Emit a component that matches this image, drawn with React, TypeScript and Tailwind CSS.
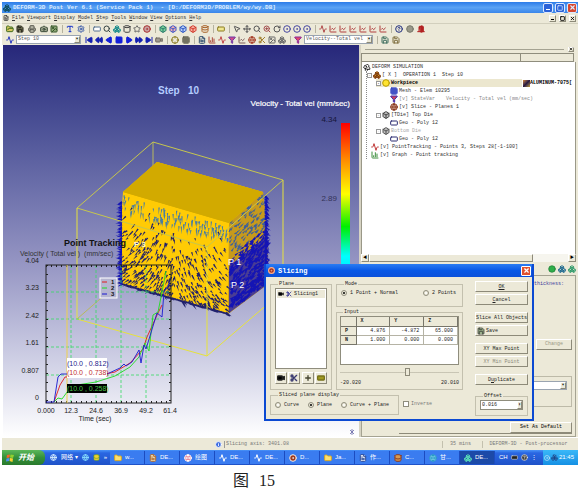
import React from "react";
import {
  Activity, BarChart3, Box, Boxes, Camera, ChartLine, Circle, CircleDot, Crosshair, Cylinder, Database,
  DoorOpen, FastForward, FileText, Filter, Folder, FolderOpen, Globe, Grid3x3, HelpCircle, Image,
  Info, Move, MousePointer2, Play, Plus, Printer, RectangleHorizontal, Rewind, RotateCw, Save, Scissors,
  Search, Settings, SkipBack, SkipForward, Square, Star, Trees, Type, Video, X, ZoomIn,
} from "lucide-react";

type IconType = React.ComponentType<{ className?: string; strokeWidth?: number }>;
type Tool = [IconType, string, string];

const MONO = "font-['Liberation_Mono','Noto_Sans_CJK_SC',monospace]";
const RAISED =
  "border border-t-white border-l-white border-r-[#8d8a79] border-b-[#8d8a79] bg-[#ece9d8]";

function ToolGroup({ tools, sep, wide }: { tools: Tool[]; sep?: boolean; wide?: boolean }) {
  return (
    <div className={`flex items-center ${wide ? "gap-[3px]" : "gap-[2px]"} ${sep ? "ml-1 border-l border-[#b5b29f] pl-[3px]" : "ml-1"}`}>
      {tools.map(([Icon, color, label]) => (
        <button key={label} type="button" aria-label={label} className={color}>
          <Icon className="size-2" strokeWidth={3} />
        </button>
      ))}
    </div>
  );
}

const fileTools: Tool[] = [
  [FolderOpen, "text-[#3f6b1e] [&_svg]:fill-[#d8c860]", "Open"],
  [Save, "text-[#222218] [&_svg]:fill-[#77775a]", "Save"],
];
const printTools: Tool[] = [[Printer, "text-[#5a5a50] [&_svg]:fill-[#b5b5a5]", "Print"]];
const captureTools: Tool[] = [
  [Camera, "text-[#3a4a38] [&_svg]:fill-[#a0a890]", "Capture"],
  [Image, "text-[#35552a] [&_svg]:fill-[#90a878]", "Picture"],
];
const textTools: Tool[] = [[Type, "text-[#1a35c8]", "Text"], [Settings, "text-[#3a5aa8]", "Settings"]];
const windowTools: Tool[] = [
  [RectangleHorizontal, "text-[#55708f] [&_svg]:fill-white", "Single window"], [Search, "text-[#33403f]", "Find"],
  [Boxes, "text-[#168a8a]", "Objects"], [Cylinder, "text-[#444]", "Cylinder"],
  [Star, "text-[#666]", "Favourite"], [CircleDot, "text-[#a83232] [&_svg]:fill-[#c8a0a0]", "Target"],
];
const cubeTools: Tool[] = [
  [Box, "text-[#2c7a6c] [&_svg]:fill-[#7ad09a]", "Shaded"], [Box, "text-[#3d57c9] [&_svg]:fill-[#f0b0b0]", "Shaded mesh"],
  [Box, "text-[#2c56c0] [&_svg]:fill-[#b8d0f8]", "Wireframe"], [Box, "text-[#cf3a2c] [&_svg]:fill-[#f8b0a0]", "Back"],
];
const planeTools: Tool[] = [[Database, "text-[#a8632a]", "Symmetry"]];
const rulerTools: Tool[] = [[RectangleHorizontal, "text-[#8a7a20] [&_svg]:fill-[#f0e890]", "Ruler"]];
const viewTools: Tool[] = [
  [MousePointer2, "text-[#555]", "Select"], [Move, "text-[#555]", "Pan"],
  [Search, "text-[#555]", "Zoom"], [ZoomIn, "text-[#a04a4a]", "Zoom window"],
  [RotateCw, "text-[#555]", "Rotate"], [CircleDot, "text-[#4747a0]", "Rotate X"],
  [CircleDot, "text-[#4747a0]", "Rotate Y"], [CircleDot, "text-[#4747a0]", "Rotate Z"],
];
const axisTools: Tool[] = [
  [Activity, "text-[#b04a4a]", "Isometric"], [ChartLine, "text-[#b03c3c]", "View XY"],
  [ChartLine, "text-[#b03c3c]", "View YZ"], [ChartLine, "text-[#b03c3c]", "View ZX"],
  [ChartLine, "text-[#b03c3c]", "View YX"], [ChartLine, "text-[#b03c3c]", "View ZY"],
  [ChartLine, "text-[#b03c3c]", "View XZ"],
];
const helpTools: Tool[] = [
  [HelpCircle, "text-[#23307f]", "Help"], [Circle, "text-[#77776a] [&_svg]:fill-[#99998a]", "Stop"],
  [DoorOpen, "text-[#b22222] [&_svg]:fill-[#b22222]", "Exit"],
];
const playTools: Tool[] = [
  [SkipBack, "text-[#1420b0] [&_svg]:fill-current", "First step"],
  [Rewind, "text-[#1420b0] [&_svg]:fill-current", "Fast backward"],
  [Play, "text-[#1420d8] [&_svg]:fill-current rotate-180", "Play backward"],
  [Square, "text-[#1420d8] [&_svg]:fill-current", "Stop playing"],
  [Play, "text-[#1420d8] [&_svg]:fill-current", "Play"],
  [FastForward, "text-[#1420b0] [&_svg]:fill-current", "Fast forward"],
  [SkipForward, "text-[#1420b0] [&_svg]:fill-current", "Last step"],
  [Video, "text-[#706a60] [&_svg]:fill-[#a09a90]", "Record"],
];
const pickTools: Tool[] = [[Crosshair, "text-[#8a7a20]", "Pick"], [Grid3x3, "text-[#4a4a38]", "Mesh"]];
const postTools: Tool[] = [
  [FileText, "text-[#33506f]", "Summary"], [BarChart3, "text-[#a8483a]", "Graph"],
  [Activity, "text-[#c04646]", "Point tracking"], [Filter, "text-[#6a3aa8] [&_svg]:fill-[#d04a8a]", "State variable"],
  [ChartLine, "text-[#7a5a58]", "Load stroke"], [Globe, "text-[#a8402a]", "Flow net"],
  [Scissors, "text-[#a07c28]", "Slicing"], [Image, "text-[#666]", "Mirror"],
  [Boxes, "text-[#6a6a6a]", "Extract"],
];
const variableTools: Tool[] = [[Filter, "text-[#8a2a9a] [&_svg]:fill-[#e04a6a]", "Variable"]];
const exportTools: Tool[] = [[Save, "text-[#3f6f5f]", "Save view"], [Save, "text-[#7f6f3f]", "Load view"]];

function PlainSelect({ label, value, className }: { label: string; value: string; className: string }) {
  return (
    <div className={`flex items-center border border-[#9aa4b0] bg-white ${className}`}>
      <select aria-label={label} defaultValue={value} className="min-w-0 flex-1 appearance-none overflow-hidden pl-px text-[5px] leading-[7px] whitespace-pre text-[#555]">
        <option>{value}</option>
      </select>
      <span className={`flex h-[7px] w-[6px] shrink-0 items-center justify-center text-[5px] leading-none text-black ${RAISED}`}>▾</span>
    </div>
  );
}

/* Velocity arrows scattered over the two visible faces of the billet. */
function makeArrows() {
  let seed = 11;
  const rnd = () => {
    seed = (seed * 16807) % 2147483647;
    return seed / 2147483647;
  };
  const arrow = (x: number, y: number, a: number, len: number, w: number) => {
    const dx = Math.cos(a), dy = Math.sin(a);
    const p = (n: number) => n.toFixed(1);
    return `M${p(x - dy * w)} ${p(y + dx * w)}L${p(x + dx * len)} ${p(y + dy * len)}L${p(x + dy * w)} ${p(y - dx * w)}Z`;
  };
  let top = "", dark = "", right = "", edge = "";
  for (let i = 0; i < 130; i++) {
    const u = rnd(), v = rnd() * 0.17;
    top += arrow(124 + u * 104, 195 + u * 31 + v * 92, 1.5 + rnd() * 0.3, 4 + rnd() * 4, 0.7);
  }
  for (let i = 0; i < 460; i++) {
    const u = rnd(), v = 0.12 + 0.88 * Math.sqrt(rnd());
    const lean = u < 0.5 ? 2.3 - u * 1.4 : 1.6 - (u - 0.5) * 1.2;
    dark += arrow(121 + u * 106, 192 + u * 31 + v * 92, lean + v * (u < 0.5 ? 0.4 : -0.4), 3 + rnd() * 4, 0.8);
  }
  for (let i = 0; i < 560; i++) {
    const u = rnd(), v = rnd();
    const seg = arrow(229 + u * (36 + v * 3), 223 - u * 30 + v * 89, -0.6 - rnd() * 0.5, 4 + v * 3, 0.7 + v * 0.5);
    if (v > 0.4) edge += seg;
    else if (i % 2) right += seg;
  }
  for (let i = 0; i < 60; i++) {
    const t = i / 60;
    edge += arrow(122, 202 + t * 84, 2.7 + rnd() * 0.7, 4 + rnd() * 3, 1.1);
    edge += arrow(265, 196 + t * 86, 0.4 + rnd() * 0.5, 4 + rnd() * 3, 1.1);
    dark += arrow(122 + t * 106, 284 + t * 30, 0.1 + rnd() * 0.5, 6, 1.1);
  }
  return { top, dark, right, edge };
}
const arrows = makeArrows();

const yTicks: [string, number][] = [["4.04", 263], ["3.23", 290], ["2.42", 318], ["1.61", 345], ["0.807", 373], ["0", 400]];
const xTicks: [string, number][] = [["0.000", 46], ["12.3", 71], ["24.6", 96], ["36.9", 121], ["49.2", 146], ["61.4", 170]];

function Viewport() {
  return (
    <div className="min-w-0 flex-1 border-l border-white bg-linear-to-b from-[#27277a] via-[#9494c2] via-55% to-white">
      <svg viewBox="3 45 356 392" className="block w-full font-['Liberation_Sans',Arial,sans-serif]">
        <defs>
          <linearGradient id="scale" x1="0" y1="0" x2="0" y2="1">
            <stop offset="0" stopColor="#f00" />
            <stop offset="0.25" stopColor="#ff8c00" />
            <stop offset="0.48" stopColor="#ff0" />
            <stop offset="0.7" stopColor="#0e0" />
            <stop offset="0.9" stopColor="#0ff" />
            <stop offset="1" stopColor="#0ef" />
          </linearGradient>
        </defs>
        <path d="M153 142V262M153 253L77 319M153 253L283 291" fill="none" stroke="#b9b95c" />
        <path d="M123 192L157 162L263 192L267 230L268 284L228 314L123 285L120 235Z" fill="#ffcb05" />
        <path d="M229 223L263 192L267 230L268 284L228 314Z" fill="#c79a1c" />
        <path d="M229 266L267 236L268 284L229 313Z" fill="#1616c8" opacity="0.7" />
        <path d={arrows.top} fill="#4a7da2" />
        <path d={arrows.dark} fill="#20206c" />
        <path d={arrows.right} fill="#3c5f9c" />
        <path d={arrows.edge} fill="#1414b4" />
        <path d="M123 192L157 162L263 192L229 223Z" fill="#d2aa00" />
        <path d="M207 247L77 208L153 142L283 180Z" fill="none" stroke="#c6c64e" />
        <path d="M77 208V319L207 356L283 291V180M207 247V356" fill="none" stroke="#e6e23c" />
        <path d="M123 192L157 162L263 192L229 223Z" fill="#d2aa00" />
        <rect x="341" y="123" width="9" height="148" fill="url(#scale)" />

        <text x="158" y="94" fontSize="10" fontWeight="bold" fill="#b4ccff" xmlSpace="preserve" className="whitespace-pre">Step   10</text>
        <text x="350" y="106" fontSize="8" fill="#fff" textAnchor="end" stroke="#fff" strokeWidth="0.2">Velocity - Total vel (mm/sec)</text>
        <text x="337" y="122" fontSize="8" fill="#16163a" textAnchor="end">4.34</text>
        <text x="337" y="201" fontSize="8" fill="#333358" textAnchor="end">2.89</text>
        <text x="228" y="265" fontSize="9" fill="#fff">P 1</text>
        <text x="231" y="288" fontSize="9" fill="#fff">P 2</text>

        <text x="64" y="246" fontSize="9" fontWeight="bold" fill="#111">Point Tracking</text>
        <text x="134" y="247" fontSize="8" fontWeight="bold" fill="#fff8d0">P 3</text>
        <text x="20" y="256" fontSize="7" fill="#333" className="whitespace-pre">Velocity ( Total vel )  (mm/sec)</text>
        <path d="M71 265V403M96 265V403M121 265V403M146 265V403M46 292H171M46 319H171M46 347H171M46 375H171" stroke="#35dc62" strokeDasharray="3 2" strokeWidth="0.8" />
        <rect x="46" y="265" width="125" height="138" fill="none" stroke="#222" />
        <path d="M46 402H171M46 266H171" stroke="#222" strokeWidth="2" strokeDasharray="1 4" />
        <path d="M47 265V403M170 265V403" stroke="#222" strokeWidth="2" strokeDasharray="1 8" />
        <path d="M67 265V403" stroke="#efd04c" />
        <g fill="none" strokeWidth="0.9">
          <path d="M54 402L60 385L65 377L96 376L115 372L130 363L143 349L147 337L158 313L162 305" stroke="#e01c1c" />
          <path d="M54 402L58 398L62 399L70 388L77 385L96 382L115 376L130 367L139 357L145 343L149 351L153 315L158 312L162 292L166 271" stroke="#1fdc1f" />
          <path d="M46 402H54L58 377L61 374H107L120 368L124 364L126 366L132 362L139 350L141 363L144 345L146 349L157 313L162 317L164 292L170 282" stroke="#1818d0" />
        </g>
        <rect x="100" y="278" width="17" height="20" fill="#b5b5d0" stroke="#fff" />
        <path d="M102 282H107" stroke="#e01c1c" />
        <path d="M102 288H107" stroke="#1fdc1f" />
        <path d="M102 294H107" stroke="#1818d0" />
        <g fontSize="6" fontWeight="bold" fill="#111">
          <text x="111" y="284">1</text>
          <text x="111" y="290">2</text>
          <text x="111" y="296">3</text>
        </g>
        <rect x="67" y="358" width="40" height="20" fill="#fff" />
        <rect x="67" y="384" width="40" height="9" fill="#000" />
        <g fontSize="7">
          <text x="67" y="366" fill="#23238c">(10.0 , 0.812)</text>
          <text x="67" y="375" fill="#c23030">(10.0 , 0.738)</text>
          <text x="67" y="391" fill="#49c649">(10.0 , 0.258)</text>
        </g>
        <g fontSize="7" fill="#222">
          {yTicks.map(([t, y]) => <text key={t} x="39" y={y} textAnchor="end">{t}</text>)}
          {xTicks.map(([t, x]) => <text key={t} x={x} y="413" textAnchor="middle">{t}</text>)}
          <text x="95" y="421" textAnchor="middle">Time (sec)</text>
        </g>
        <path d="M350 430L354 434M354 430L350 434M352 429V435" stroke="#6a6aa8" strokeWidth="0.8" />
      </svg>
    </div>
  );
}

interface Node { icon: IconType; color: string; text: string; extra?: string; muted?: boolean }
const nodes: Node[] = [
  { icon: Grid3x3, color: "text-[#2435b8] fill-[#a0b0f0]", text: "Mesh - Elem 10295" },
  { icon: Filter, color: "text-[#3a2fb0] fill-[#d0405a]", text: "[v] StateVar", extra: "Velocity - Total vel (mm/sec)", muted: true },
  { icon: Globe, color: "text-[#8a3a20] fill-[#e0c0b0]", text: "[v] Slice - Planes 1" },
];

function TreeIcon({ icon: Icon, color }: { icon: IconType; color: string }) {
  return <Icon className={`size-2 shrink-0 ${color}`} strokeWidth={3} />;
}

function Toggle() {
  return <span className="flex size-[5px] shrink-0 items-center justify-center border border-[#999] bg-white text-[4px] leading-none">-</span>;
}

function Tree() {
  const row = "flex h-2 items-center gap-[1px] whitespace-pre";
  return (
    <div className="h-[192px] overflow-hidden border-r border-l border-[#9a9888] bg-white pt-px pl-px text-[5px] text-[#333]">
      <div className={row}><TreeIcon icon={Trees} color="text-[#222]" />DEFORM SIMULATION</div>
      <div className="ml-[3px] border-l border-dotted border-[#888]">
        <div className={row}><Toggle /><TreeIcon icon={Boxes} color="text-[#7a3a10] fill-[#e09a20]" />{"[ X ]  OPERATION 1  Step 10"}</div>
        <div className="ml-[9px]">
          <div className="flex h-2 items-center">
            <div className="flex h-2 w-[146px] items-center gap-[1px] bg-[#ece7cf] font-bold text-black">
              <Toggle /><TreeIcon icon={Circle} color="text-[#b89a00] fill-[#ffe430]" />Workpiece
            </div>
            <span className="ml-px size-[7px] shrink-0 bg-linear-to-br from-[#e08a20] via-[#2a1a40] to-[#c8a020]" />
            <span className="font-bold text-black">ALUMINUM-7075[</span>
          </div>
          {nodes.map((n) => (
            <div key={n.text} className={`${row} pl-[14px] ${n.muted ? "text-[#888]" : ""}`}>
              <TreeIcon icon={n.icon} color={n.color} />
              <span className={n.extra ? "w-[46px]" : ""}>{n.text}</span>
              {n.extra && <span>{n.extra}</span>}
            </div>
          ))}
          <div className={row}><Toggle /><TreeIcon icon={Box} color="text-[#444] fill-[#bbb]" />[TDie] Top Die</div>
          <div className={`${row} pl-[14px]`}><TreeIcon icon={RectangleHorizontal} color="text-[#2a2a70]" />Geo - Poly 12</div>
          <div className={`${row} text-[#aaa]`}><Toggle /><TreeIcon icon={Box} color="text-[#555] fill-[#bbb]" />Bottom Die</div>
          <div className={`${row} pl-[14px]`}><TreeIcon icon={RectangleHorizontal} color="text-[#2a2a70]" />Geo - Poly 12</div>
        </div>
        <div className={`${row} pl-1`}><TreeIcon icon={Activity} color="text-[#c03a3a]" />[v] PointTracking - Points 3, Steps 28[-1-100]</div>
        <div className={`${row} pl-1`}><TreeIcon icon={BarChart3} color="text-[#3f8f3f]" />[v] Graph - Point tracking</div>
      </div>
    </div>
  );
}

function SidePanel() {
  return (
    <div className="flex w-[219px] shrink-0 flex-col border-l-2 border-[#d6d3c3] bg-[#ece9d8]">
      <div className="flex h-2 items-center gap-1 pr-1 pl-1">
        <div className="h-px flex-1 bg-[#a5a392]" />
        <button type="button" aria-label="Close panel" className={`flex h-[5px] w-[6px] items-center justify-center ${RAISED}`}><X className="size-1" strokeWidth={4} /></button>
      </div>
      <div className="mr-1 flex h-[9px] border border-[#8f8d7d]">
        <div className="flex-1 border-r border-[#8f8d7d]" />
        <div className="w-[52px]" />
      </div>
      <div className="mr-[2px]"><Tree /></div>
      <div className="mr-[2px] flex h-2 items-center bg-[#f6f5ee]">
        <button type="button" aria-label="Scroll left" className={`flex size-2 items-center justify-center text-[4px] leading-none ${RAISED}`}>◀</button>
        <div className={`h-2 w-[164px] ${RAISED}`} />
        <div className="flex-1" />
        <button type="button" aria-label="Scroll right" className={`flex size-2 items-center justify-center text-[4px] leading-none ${RAISED}`}>▶</button>
      </div>
      <div className="flex h-[13px] items-center justify-end gap-[2px] pr-[2px]">
        <Circle className="size-2 fill-[#2fae4a] text-[#1c7a33]" />
        <Boxes className="size-2 text-[#1f6a8f]" strokeWidth={3} />
        <Boxes className="size-2 text-[#2f9a6a]" strokeWidth={3} />
      </div>
      <div className="mr-[2px] flex flex-1 flex-col items-end border border-[#a5a392] pr-[3px] text-[5px] text-black">
        <div className="mt-[5px] w-[38px] text-[#3c3c9c]">thickness:</div>
        <button type="button" disabled className={`mt-[51px] h-[11px] w-9 text-[#999785] ${RAISED}`}>Change</button>
        <div className="mt-[26px] flex h-[31px] w-[160px] items-start justify-end border border-[#bdbaa8] p-1">
          <PlainSelect label="Material" value="" className="w-[90px]" />
        </div>
        <div className="mt-[15px] flex w-[173px] justify-end border-b border-[#8d8a79]">
          <button type="button" className={`h-[11px] w-[62px] ${RAISED}`}>Set As Default</button>
        </div>
      </div>
    </div>
  );
}

function Group({ title, className, children }: { title: string; className: string; children: React.ReactNode }) {
  return (
    <fieldset className={`min-w-0 border border-[#c3c0ae] ${className}`}>
      <legend className="ml-[3px] px-px leading-[6px]">{title}</legend>
      {children}
    </fieldset>
  );
}

function Radio({ name, label, checked }: { name: string; label: string; checked?: boolean }) {
  return (
    <label className="flex items-center gap-[3px] whitespace-pre">
      <input type="radio" name={name} defaultChecked={checked} className="size-[6px] appearance-none rounded-full border border-[#8f8d7d] bg-white bg-clip-content p-px checked:bg-black" />
      {label}
    </label>
  );
}

function DialogButton({ label, className, disabled }: { label: React.ReactNode; className?: string; disabled?: boolean }) {
  return (
    <button type="button" disabled={disabled} className={`flex h-[11px] w-full items-center whitespace-nowrap disabled:text-[#8a8878] ${RAISED} ${className ?? ""}`}>
      {label}
    </button>
  );
}

const planeButtons: Tool[] = [
  [Video, "fill-black text-[#222]", "Show"], [Scissors, "text-[#3a3a70]", "Cut"],
  [Plus, "text-[#444430]", "Add"], [RectangleHorizontal, "fill-[#a09a20] text-[#77721a]", "Remove"],
];

function SlicingDialog() {
  const cell = "border-r border-b border-[#b5b3a5] pr-1 text-right font-normal";
  const head = "border-r border-b border-[#77756a] bg-[#ece9d8] pl-1 text-left font-bold";
  return (
    <div role="dialog" aria-label="Slicing" className="absolute top-[219px] left-[262px] w-[270px] border-2 border-t-0 border-[#0b49d2] bg-[#ece9d8] text-[5px] leading-[6px] text-[#222]">
      <div className="flex h-[13px] items-center gap-[3px] bg-linear-to-b from-[#2b7cf2] via-[#0858e6] to-[#0a50da] pr-px pl-[2px] text-[7px] font-bold text-white">
        <CircleDot className="size-[7px] fill-[#a03020] text-[#ffb08a]" strokeWidth={4} />
        <span className="flex-1">Slicing</span>
        <button type="button" aria-label="Close" className="flex size-[10px] items-center justify-center rounded-[1px] border border-white bg-[#e0522e]"><X className="size-[7px]" strokeWidth={4} /></button>
      </div>
      <div className="flex gap-3 px-1 pt-1 pb-[3px]">
        <div className="flex-1">
          <div className="flex gap-1">
            <Group title="Plane" className="h-[109px] w-[62px] px-1">
              <div className="mt-px h-[81px] border border-[#8f8d7d] bg-white p-px">
                <div className="flex h-2 items-center gap-[2px] bg-[#ece9d8]">
                  <Video className="ml-px size-[6px] fill-black" /><Scissors className="size-[6px] text-[#2a2a90]" strokeWidth={3} />Slicing1
                </div>
              </div>
              <div className="mt-[3px] flex justify-between">
                {planeButtons.map(([Icon, color, label]) => (
                  <button key={label} type="button" aria-label={label} className={`flex h-3 w-3 items-center justify-center ${RAISED}`}><Icon className={`size-2 ${color}`} strokeWidth={4} /></button>
                ))}
              </div>
            </Group>
            <div className="flex-1">
              <Group title="Mode" className="h-[26px] px-1">
                <div className="mt-[3px] flex justify-between pr-[2px]">
                  <Radio name="mode" label="1 Point + Normal" checked />
                  <Radio name="mode" label="2 Points" />
                </div>
              </Group>
              <Group title="Input" className="mt-[2px] h-[81px] px-[3px]">
                <div className="mt-px h-[49px] border border-[#8f8d7d] bg-white">
                  <table className="w-full table-fixed border-collapse">
                    <thead>
                      <tr className="h-[9px]"><th aria-label="Row" className={`w-[15px] ${head}`} /><th className={head}>X</th><th className={head}>Y</th><th className={head}>Z</th></tr>
                    </thead>
                    <tbody>
                      <tr className="h-[9px]"><th className={head}>P</th><td className={cell}>4.876</td><td className={cell}>-4.872</td><td className={cell}>65.000</td></tr>
                      <tr className="h-[9px]"><th className={head}>N</th><td className={cell}>1.000</td><td className={cell}>0.000</td><td className={cell}>0.000</td></tr>
                    </tbody>
                  </table>
                </div>
                <input type="range" aria-label="Position" min="0" max="100" defaultValue="57" className="mt-[3px] block h-2 w-full appearance-none bg-linear-to-b from-transparent from-45% via-[#8d8a79] via-50% to-transparent to-60% [&::-webkit-slider-thumb]:h-2 [&::-webkit-slider-thumb]:w-[5px] [&::-webkit-slider-thumb]:appearance-none [&::-webkit-slider-thumb]:border [&::-webkit-slider-thumb]:border-[#8d8a79] [&::-webkit-slider-thumb]:bg-[#ece9d8]" />
                <div className="mt-1 flex justify-between"><span>-20.020</span><span>20.010</span></div>
              </Group>
            </div>
          </div>
          <div className="mt-[2px] flex items-center gap-1">
            <Group title="Sliced plane display" className="h-[23px] w-[129px] px-1">
              <div className="mt-1 flex gap-[9px]">
                <Radio name="display" label="Curve" />
                <Radio name="display" label="Plane" checked />
                <Radio name="display" label="Curve + Plane" />
              </div>
            </Group>
            <label className="flex items-center gap-[2px] text-[#777]">
              <input type="checkbox" className="size-[6px] appearance-none border border-[#8f8d7d] bg-white" />
              Inverse
            </label>
          </div>
        </div>
        <div className="flex w-[53px] flex-col">
          <DialogButton label={<u>OK</u>} className="justify-center" />
          <DialogButton label={<span><u>C</u>ancel</span>} className="mt-[2px] justify-center" />
          <DialogButton label="Slice All Objects" className="mt-[7px] justify-center" />
          <DialogButton label={<><Save className="mr-px size-2 fill-[#9ab08a]" />Save</>} className="mt-[2px] pl-px" />
          <DialogButton label="XY Max Point" className="mt-[7px] justify-center" />
          <DialogButton label="XY Min Point" className="mt-[2px] justify-center" disabled />
          <DialogButton label={<span>D<u>u</u>plicate</span>} className="mt-[7px] justify-center" />
          <Group title="Offset" className="mt-2 h-[23px] px-1">
            <div className="mt-px flex h-[10px] items-center border border-[#8f8d7d] bg-white">
              <input aria-label="Offset" defaultValue="0.016" className="min-w-0 flex-1 pl-px" />
              <span className={`flex h-2 w-[5px] items-center justify-center text-[5px] leading-none ${RAISED}`}>⬍</span>
            </div>
          </Group>
        </div>
      </div>
    </div>
  );
}

const tasks: [IconType, string, string][] = [
  [Folder, "fill-[#ffe070] text-[#d8a820]", "w..."], [FileText, "fill-[#f4e8c0] text-[#b06a30]", "DE..."],
  [Globe, "fill-[#d83a5a] text-white", "绘图"], [Activity, "text-white", "DE..."],
  [Activity, "text-white", "DE..."], [CircleDot, "fill-[#a03a20] text-[#eee]", "D..."],
  [Folder, "fill-[#ffe070] text-[#d8a820]", "Ja..."], [FileText, "fill-white text-[#2a4a9a]", "作..."],
  [Database, "fill-[#d89a50] text-[#8a3a20]", "C..."], [Globe, "fill-[#9ae0f0] text-[#2a9ac8]", "甘..."],
  [Boxes, "text-[#5ae0b8]", "DE..."],
];

function Taskbar() {
  return (
    <div className="flex h-[15px] items-center overflow-hidden bg-linear-to-b from-[#4a94f8] via-[#2a66e2] via-20% to-[#1f52c8] text-[6px] text-white font-['Liberation_Sans','Noto_Sans_CJK_SC',sans-serif]">
      <button type="button" className="flex h-full w-[43px] items-center gap-1 rounded-r-md bg-linear-to-b from-[#5cb85a] via-[#34903a] to-[#2a7a2c] pl-1 text-[8px] leading-none font-bold italic">
        <svg viewBox="0 0 8 8" className="size-2"><path d="M1 1L4 0.500L3.500 3.500L0.500 4Z" fill="#f4642c" /><path d="M4.500 0.500L8 1L7 4L4 3.500Z" fill="#90d030" /><path d="M0.500 4.500L3.500 4L3 7L0 7.500Z" fill="#4a90f4" /><path d="M4 4L7 4.500L6.500 8L3.500 7Z" fill="#fcd030" /></svg>
        开始
      </button>
      <div className="flex w-[65px] items-center gap-1 pl-[5px]">
        <Globe className="size-[7px] text-[#d8f0ff]" strokeWidth={3} />
        <span>网络 ▾</span>
        <Globe className="size-[7px] text-[#8ae0ff]" strokeWidth={3} />
        <Database className="size-[7px] fill-[#f0d030] text-[#4a9a30]" />
        <span>»</span>
      </div>
      {tasks.map(([Icon, color, label], i) => (
        <button key={i} type="button" className={`flex h-[13px] min-w-0 flex-1 items-center gap-[3px] border-r border-[#1c4cc0] pl-1 ${i === 10 ? "bg-[#1c4aa8]" : "bg-[#3a7cf0]"}`}>
          <Icon className={`size-2 shrink-0 ${color}`} strokeWidth={3} />
          <span className="truncate">{label}</span>
        </button>
      ))}
      <div className="flex h-full w-[48px] items-center gap-[3px] pl-1">
        <span>CH</span>
        <RectangleHorizontal className="size-[7px] fill-[#222] text-[#ddd]" />
        <HelpCircle className="size-[7px] fill-[#444]" />
        <span>⋮</span>
      </div>
      <div className="flex h-full w-[35px] items-center justify-between bg-linear-to-b from-[#3ab8f8] to-[#1490e4] pr-1 pl-px">
        <CircleDot className="size-[6px]" />
        <Boxes className="size-[7px] text-[#204080]" />
        <span>21:45</span>
      </div>
    </div>
  );
}

const menu = ["File", "Viewport", "Display", "Model", "Step", "Tools", "Window", "View", "Options", "Help"];

export default function App() {
  const winButton = "flex size-[10px] items-center justify-center rounded-[2px] border border-[#dbe8ff]";
  return (
    <main className="bg-white p-[2px]">
      <section className={`bg-[#ece9d8] text-[5px] leading-[7px] ${MONO}`}>
        <header className="flex h-[11px] items-center gap-[2px] bg-linear-to-b from-[#2c7ce8] via-[#5aa2f4] to-[#3a86ea] pr-px pl-px text-[6px] font-bold text-[#dcebff]">
          <Boxes className="size-2 text-[#0e4d5c]" strokeWidth={3} />
          <h1 className="flex-1 whitespace-pre">DEFORM-3D Post Ver 6.1 (Service Pack 1)  - [D:/DEFORM3D/PROBLEM/wy/wy.DB]</h1>
          <button type="button" aria-label="Minimize" className={`${winButton} bg-[#2a62d8] pt-1`}><span className="h-px w-1 bg-white" /></button>
          <button type="button" aria-label="Restore" className={`${winButton} bg-[#2a62d8]`}><Square className="size-[6px]" strokeWidth={3} /></button>
          <button type="button" aria-label="Close window" className={`${winButton} bg-[#d8452c]`}><X className="size-[7px]" strokeWidth={4} /></button>
        </header>
        <nav className="flex h-[10px] items-center gap-[3px] pr-[2px] pl-px text-[#333]">
          <FileText className="size-[6px]" strokeWidth={3} />
          {menu.map((m) => <button key={m} type="button"><u>{m[0]}</u>{m.slice(1)}</button>)}
          <div className="ml-auto flex items-center gap-[3px] text-black">
            <button type="button" aria-label="Minimize view" className={`flex h-[7px] w-[7px] items-end justify-center pb-px ${RAISED}`}><span className="h-px w-[3px] bg-black" /></button>
            <button type="button" aria-label="Restore view" className={RAISED}><Square className="size-[5px]" strokeWidth={4} /></button>
            <button type="button" aria-label="Close view" className={RAISED}><X className="size-[5px]" strokeWidth={4} /></button>
          </div>
        </nav>
        <div className="flex h-[11px] items-center border-t border-[#d2cfbd]">
          <ToolGroup tools={fileTools} />
          <ToolGroup tools={printTools} />
          <ToolGroup tools={captureTools} />
          <ToolGroup tools={textTools} sep wide />
          <ToolGroup tools={windowTools} sep />
          <ToolGroup tools={cubeTools} sep />
          <ToolGroup tools={planeTools} />
          <ToolGroup tools={rulerTools} sep />
          <ToolGroup tools={viewTools} sep />
          <ToolGroup tools={axisTools} sep />
          <ToolGroup tools={helpTools} sep wide />
        </div>
        <div className="flex h-[11px] items-center">
          <ToolGroup tools={[[Activity, "text-[#2a3ac0]", "Step list"]]} />
          <PlainSelect label="Step" value="Step  10" className="ml-[2px] w-[65px]" />
          <ToolGroup tools={playTools} />
          <ToolGroup tools={pickTools} sep wide />
          <ToolGroup tools={postTools} sep />
          <ToolGroup tools={variableTools} sep />
          <PlainSelect label="Variable shown" value="Velocity--Total vel" className="ml-[2px] w-[69px]" />
          <ToolGroup tools={exportTools} sep wide />
        </div>
        <div className="relative flex">
          <Viewport />
          <SidePanel />
          <SlicingDialog />
        </div>
        <footer className="flex h-[13px] items-center border-t border-white pr-1 text-[#777]">
          <div className="flex flex-1 items-center justify-center gap-[2px] pl-[60px]">
            <Info className="size-[7px] fill-[#3a6ae0] text-white" strokeWidth={3} />
            <span className="border-l border-[#999] pl-px">Slicing axis: 3401.08</span>
          </div>
          <span className="mr-1 w-[36px] border-l border-[#c3c0ae] text-center">35 mins</span>
          <span className="w-[92px] border-l border-[#c3c0ae] text-center">DEFORM-3D - Post-processor</span>
        </footer>
        <Taskbar />
      </section>
      <p className="mt-1 flex items-center justify-center gap-[10px] pr-[72px] text-base leading-6 text-[#222] font-['Liberation_Serif','Noto_Sans_CJK_SC',serif]">
        <span>图</span><span>15</span>
      </p>
    </main>
  );
}
